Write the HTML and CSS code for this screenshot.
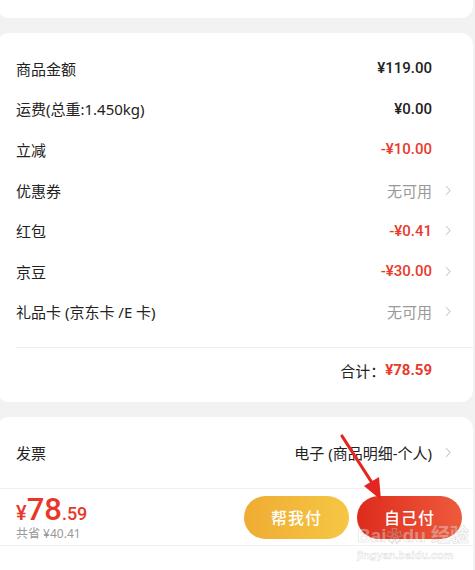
FILE: index.html
```html
<!DOCTYPE html>
<html lang="zh-CN">
<head>
<meta charset="utf-8">
<link rel="stylesheet" href="styles.css">
</head>
<body>
<div class="page">
  <div class="card top-card"></div>

  <div class="card summary">
    <div class="row"><span class="label">商品金额</span><span class="value num">¥119.00</span><span class="chev-space"></span></div>
    <div class="row"><span class="label">运费(总重:1.450kg)</span><span class="value num">¥0.00</span><span class="chev-space"></span></div>
    <div class="row"><span class="label">立减</span><span class="value num red">-¥10.00</span><span class="chev-space"></span></div>
    <div class="row"><span class="label">优惠券</span><span class="value gray">无可用</span><span class="chev-space"><svg class="chev" viewBox="0 0 6 11"><polyline points="1,1 5,5.5 1,10"/></svg></span></div>
    <div class="row"><span class="label">红包</span><span class="value num red">-¥0.41</span><span class="chev-space"><svg class="chev" viewBox="0 0 6 11"><polyline points="1,1 5,5.5 1,10"/></svg></span></div>
    <div class="row"><span class="label">京豆</span><span class="value num red">-¥30.00</span><span class="chev-space"><svg class="chev" viewBox="0 0 6 11"><polyline points="1,1 5,5.5 1,10"/></svg></span></div>
    <div class="row"><span class="label">礼品卡 (京东卡 /E 卡)</span><span class="value gray">无可用</span><span class="chev-space"><svg class="chev" viewBox="0 0 6 11"><polyline points="1,1 5,5.5 1,10"/></svg></span></div>
    <div class="divider"></div>
    <div class="total-row"><span class="total-label">合计：</span><span class="total-val">¥78.59</span><span class="chev-space"></span></div>
  </div>

  <div class="card invoice">
    <div class="invoice-row"><span class="label">发票</span><span class="value">电子 (商品明细-个人)</span><span class="chev-space"><svg class="chev" viewBox="0 0 6 11"><polyline points="1,1 5,5.5 1,10"/></svg></span></div>
    <div class="paybar">
      <div class="price">
        <div class="big"><span class="yen">¥</span><span class="int">78</span><span class="dec">.59</span></div>
        <div class="save">共省 ¥40.41</div>
      </div>
      <div class="btns">
        <div class="btn help">帮我付</div>
        <div class="btn self">自己付</div>
      </div>
    </div>
    <div class="bottom"></div>
  </div>

  <svg class="arrow" viewBox="0 0 60 80" width="60" height="80">
    <line x1="3" y1="3" x2="37" y2="56" stroke="#e5251f" stroke-width="3.2" stroke-linecap="round"/>
    <polygon points="25,53 40,44 42,67" fill="#e5251f"/>
  </svg>
  <div class="wm"><span class="wm-main">Bai<span class="paw">❀</span>du 经验</span><span class="wm-sub">jingyan.baidu.com</span></div>
</div>
</body>
</html>
```

FILE: styles.css
```css
* { box-sizing: border-box; }
html, body { margin: 0; padding: 0; }
body {
  background: #f2f2f2;
  font-family: "Noto Sans", "Noto Sans CJK SC", sans-serif;
  color: #222;
  width: 475px;
  height: 570px;
  overflow: hidden;
}
.page { position: relative; width: 475px; }
.card {
  background: #fff;
  margin: 0 2px 0 -3px;
  border-radius: 12px;
}
.top-card {
  height: 18px;
  border-radius: 0 0 12px 12px;
}
.summary {
  margin-top: 15px;
  padding: 15px 0 10px 19px;
}
.row, .invoice-row, .total-row {
  display: flex;
  align-items: center;
}
.row { height: 40.6px; }
.label { flex: 1; font-size: 15px; color: #222; }
.value { font-size: 15px; color: #222; }
.value.num {
  font-family: "Roboto", "Noto Sans", sans-serif;
  font-weight: 500;
}
.value.red { color: #e93b2d; }
.value.gray { color: #999; font-weight: 400; }
.chev-space {
  width: 41px;
  display: flex;
  align-items: center;
  justify-content: flex-start;
  padding-left: 13px;
}
.chev { width: 6px; height: 11px; }
.chev polyline { fill: none; stroke: #c8c8c8; stroke-width: 1.1; }
.divider {
  height: 1px;
  background: #eeeeee;
  margin-top: 15px;
}
.total-row {
  height: 44px;
  justify-content: flex-end;
}
.total-label { font-size: 15px; color: #222; }
.total-val {
  font-family: "Roboto", "Noto Sans", sans-serif;
  font-size: 15px;
  color: #e93b2d;
  font-weight: 700;
}

.invoice {
  margin-top: 15px;
  border-radius: 12px 12px 0 0;
  height: 160px;
}
.invoice-row {
  height: 71px;
  padding-left: 19px;
}
.paybar {
  border-top: 1px solid #f0f0f0;
  border-bottom: 1px solid #f0f0f0;
  height: 58px;
  display: flex;
  align-items: center;
  padding-left: 19px;
}
.price { flex: 1; display: flex; flex-direction: column; }
.big {
  color: #e8382a;
  font-family: "Roboto", "Noto Sans", sans-serif;
  font-weight: 500;
  line-height: 30px;
  height: 30px;
  margin-top: 2px;
}
.yen { font-size: 20px; }
.int { font-size: 31px; }
.dec { font-size: 18px; }
.save {
  font-size: 12px;
  color: #999;
  line-height: 14px;
  margin-top: 2px;
}
.btns { display: flex; gap: 8px; margin-right: 11px; }
.btn {
  width: 105px;
  height: 43px;
  border-radius: 22px;
  color: #fff;
  font-size: 16px;
  font-weight: 500;
  display: flex;
  align-items: center;
  justify-content: center;
  letter-spacing: 1px;
}
.help { background: linear-gradient(90deg, #efac33, #f5c744); }
.self { background: linear-gradient(90deg, #dd2c1c, #ee5a3c); }
.bottom { height: 30px; }

.arrow {
  position: absolute;
  left: 339px;
  top: 433px;
}
.wm {
  position: absolute;
  left: 357px;
  top: 527px;
  display: flex;
  flex-direction: column;
  align-items: flex-start;
  pointer-events: none;
}
.wm-main {
  font-family: "Liberation Sans", "Noto Sans CJK SC", sans-serif;
  font-size: 19px;
  font-weight: 700;
  color: rgba(255,255,255,0.35);
  -webkit-text-stroke: 0.6px rgba(150,150,150,0.35);
  line-height: 18px;
}
.paw { font-size: 16px; }
.wm-sub {
  font-family: "Liberation Sans", sans-serif;
  font-size: 11px;
  font-weight: 700;
  color: rgba(255,255,255,0.5);
  -webkit-text-stroke: 0.5px rgba(150,150,150,0.35);
  line-height: 13px;
  margin-top: 3px;
}
```
